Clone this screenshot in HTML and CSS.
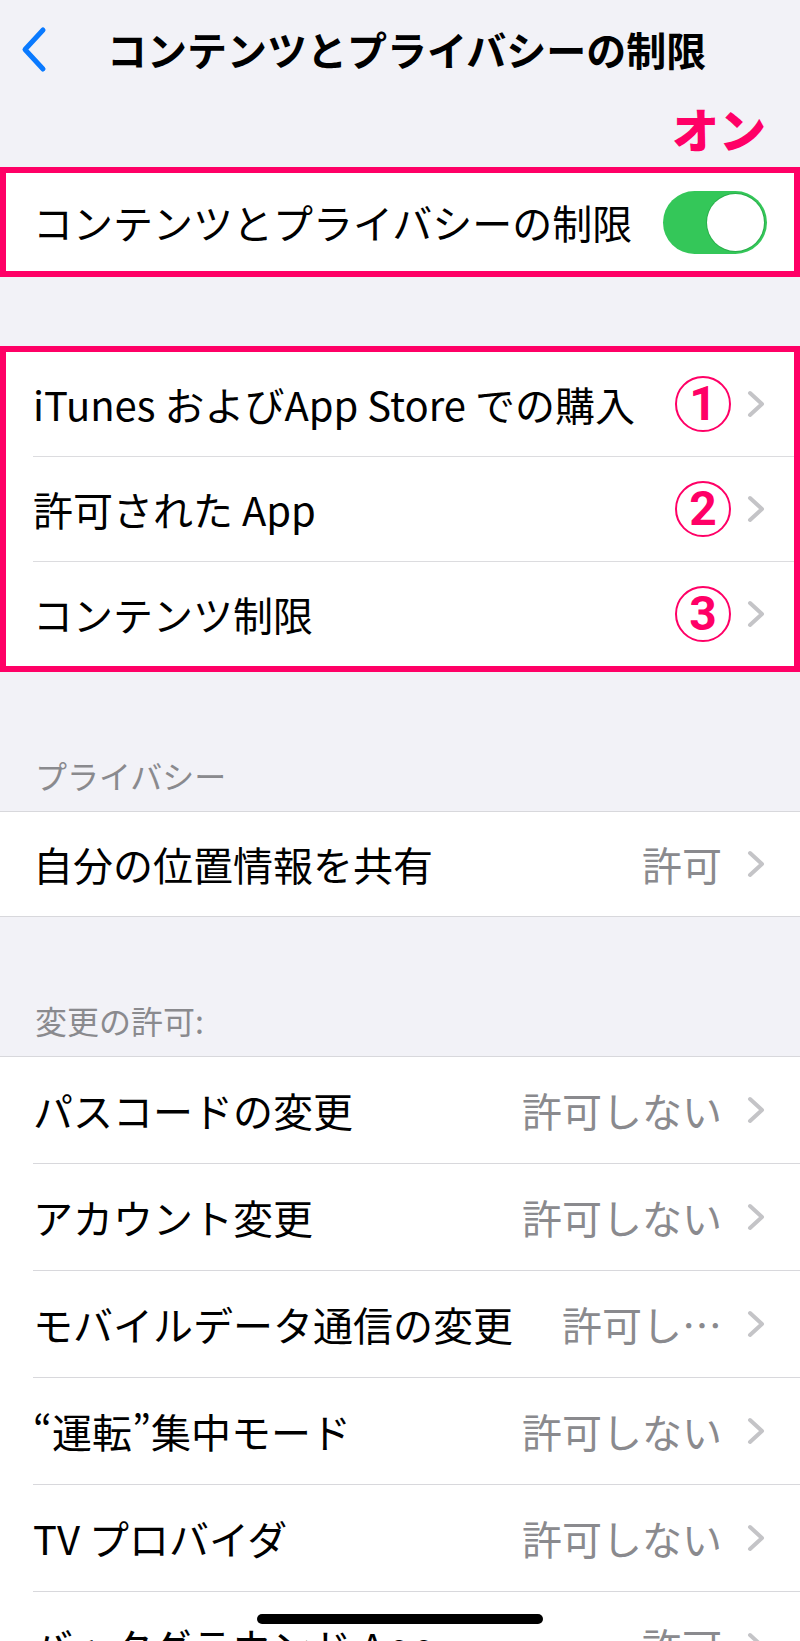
FILE: index.html
```html
<!DOCTYPE html>
<html lang="ja">
<head>
  <meta charset="UTF-8" />
  <meta name="viewport" content="width=device-width,initial-scale=1.0" />
  <title>コンテンツとプライバシーの制限</title>
  <link rel="stylesheet" href="styles.css">
</head>
<body>

<!-- NAV BAR -->
<header class="navbar">
  <svg class="back" width="27" height="47" viewBox="0 0 27 47">
    <path d="M23 4 L5 23.5 L23 43" fill="none" stroke="#0a7aff" stroke-width="5" stroke-linecap="round" stroke-linejoin="round"/>
  </svg>
  <h1>コンテンツとプライバシーの制限</h1>
</header>

<div class="note">オン</div>

<!-- MAIN SWITCH -->
<section class="mark">
  <div class="row">
    <div class="row-body">
      <span class="label">コンテンツとプライバシーの制限</span>
      <span class="toggle"><span class="knob"></span></span>
    </div>
  </div>
</section>

<!-- RESTRICTIONS -->
<section class="mark list">
  <div class="row">
    <div class="row-body">
      <span class="label">iTunes およびApp Store での購入</span>
      <span class="num">1</span>
      <svg class="chev" width="18" height="28" viewBox="0 0 18 28"><path d="M3 3 L15 14 L3 25" fill="none" stroke="#c4c4c7" stroke-width="4" stroke-linecap="round" stroke-linejoin="round"/></svg>
    </div>
  </div>
  <div class="row">
    <div class="row-body">
      <span class="label">許可された App</span>
      <span class="num">2</span>
      <svg class="chev" width="18" height="28" viewBox="0 0 18 28"><path d="M3 3 L15 14 L3 25" fill="none" stroke="#c4c4c7" stroke-width="4" stroke-linecap="round" stroke-linejoin="round"/></svg>
    </div>
  </div>
  <div class="row">
    <div class="row-body">
      <span class="label">コンテンツ制限</span>
      <span class="num">3</span>
      <svg class="chev" width="18" height="28" viewBox="0 0 18 28"><path d="M3 3 L15 14 L3 25" fill="none" stroke="#c4c4c7" stroke-width="4" stroke-linecap="round" stroke-linejoin="round"/></svg>
    </div>
  </div>
</section>

<!-- PRIVACY -->
<div class="section-title">プライバシー</div>
<section class="group">
  <div class="row">
    <div class="row-body">
      <span class="label">自分の位置情報を共有</span>
      <span class="value">許可</span>
      <svg class="chev" width="18" height="28" viewBox="0 0 18 28"><path d="M3 3 L15 14 L3 25" fill="none" stroke="#c4c4c7" stroke-width="4" stroke-linecap="round" stroke-linejoin="round"/></svg>
    </div>
  </div>
</section>

<!-- ALLOW CHANGES -->
<div class="section-title">変更の許可:</div>
<section class="group tall">
  <div class="row">
    <div class="row-body">
      <span class="label">パスコードの変更</span>
      <span class="value">許可しない</span>
      <svg class="chev" width="18" height="28" viewBox="0 0 18 28"><path d="M3 3 L15 14 L3 25" fill="none" stroke="#c4c4c7" stroke-width="4" stroke-linecap="round" stroke-linejoin="round"/></svg>
    </div>
  </div>
  <div class="row">
    <div class="row-body">
      <span class="label">アカウント変更</span>
      <span class="value">許可しない</span>
      <svg class="chev" width="18" height="28" viewBox="0 0 18 28"><path d="M3 3 L15 14 L3 25" fill="none" stroke="#c4c4c7" stroke-width="4" stroke-linecap="round" stroke-linejoin="round"/></svg>
    </div>
  </div>
  <div class="row">
    <div class="row-body">
      <span class="label">モバイルデータ通信の変更</span>
      <span class="value">許可し…</span>
      <svg class="chev" width="18" height="28" viewBox="0 0 18 28"><path d="M3 3 L15 14 L3 25" fill="none" stroke="#c4c4c7" stroke-width="4" stroke-linecap="round" stroke-linejoin="round"/></svg>
    </div>
  </div>
  <div class="row">
    <div class="row-body">
      <span class="label">“運転”集中モード</span>
      <span class="value">許可しない</span>
      <svg class="chev" width="18" height="28" viewBox="0 0 18 28"><path d="M3 3 L15 14 L3 25" fill="none" stroke="#c4c4c7" stroke-width="4" stroke-linecap="round" stroke-linejoin="round"/></svg>
    </div>
  </div>
  <div class="row">
    <div class="row-body">
      <span class="label">TV プロバイダ</span>
      <span class="value">許可しない</span>
      <svg class="chev" width="18" height="28" viewBox="0 0 18 28"><path d="M3 3 L15 14 L3 25" fill="none" stroke="#c4c4c7" stroke-width="4" stroke-linecap="round" stroke-linejoin="round"/></svg>
    </div>
  </div>
  <div class="row">
    <div class="row-body">
      <span class="label">バックグラウンド App</span>
      <span class="value">許可</span>
      <svg class="chev" width="18" height="28" viewBox="0 0 18 28"><path d="M3 3 L15 14 L3 25" fill="none" stroke="#c4c4c7" stroke-width="4" stroke-linecap="round" stroke-linejoin="round"/></svg>
    </div>
  </div>
</section>

<div class="home-bar"></div>

</body>
</html>
```

FILE: styles.css
```css
* {
  box-sizing: border-box;
  margin: 0;
  padding: 0;
}
body {
  font-family: "Noto Sans CJK JP", "Noto Sans", sans-serif;
  background-color: #f2f2f7;
  color: #000;
  height: 1641px;
  overflow: hidden;
}

/* NAV BAR */
.navbar {
  display: flex;
  align-items: center;
  height: 97px;
  padding-left: 20px;
}
.navbar .back {
  margin-top: 1px;
}
.navbar h1 {
  font-size: 40px;
  font-weight: 700;
  margin-left: 60px;
  line-height: 1;
}

/* PINK NOTE */
.note {
  height: 70px;
  line-height: 62px;
  text-align: right;
  padding-right: 34px;
  color: #ff0066;
  font-size: 47px;
  font-weight: 900;
}

/* HIGHLIGHT BOXES */
.mark {
  background-color: #fff;
  border: 6px solid #ff0066;
}
.mark .row {
  padding-left: 27px;
}
.mark .row-body {
  height: 98px;
  padding-right: 27px;
}
.list {
  margin-top: 69px;
}
.list .row-body {
  height: 105px;
  padding-right: 29px;
  border-bottom: 1px solid #dcdcdf;
}
.list .row:last-child .row-body {
  height: 104px;
  border-bottom: none;
}

/* ROWS */
.row-body {
  display: flex;
  align-items: center;
}
.label {
  flex: 1;
  font-size: 40px;
  line-height: 1;
  white-space: nowrap;
}
.value {
  font-size: 40px;
  line-height: 1;
  color: #8a8a8e;
  margin-right: 25px;
}
.chev {
  flex-shrink: 0;
}
.num {
  width: 56px;
  height: 56px;
  border: 2px solid #ff0066;
  border-radius: 50%;
  margin-right: 16px;
  display: flex;
  align-items: center;
  justify-content: center;
  color: #ff0066;
  font-family: "Roboto", sans-serif;
  font-weight: 700;
  font-size: 48px;
  line-height: 1;
}

/* TOGGLE */
.toggle {
  width: 104px;
  height: 63px;
  border-radius: 32px;
  background-color: #34c759;
  display: flex;
  align-items: center;
  justify-content: flex-end;
  padding-right: 3px;
}
.knob {
  width: 57px;
  height: 57px;
  border-radius: 50%;
  background-color: #fff;
  box-shadow: 0 0 0 1px rgba(30, 150, 60, 0.5);
}

/* GROUPED LISTS */
.section-title {
  height: 139px;
  display: flex;
  align-items: flex-end;
  padding: 0 0 16px 35px;
  font-size: 32px;
  line-height: 40px;
  color: #8a8a8e;
}
.group {
  background-color: #fff;
  border-top: 1px solid #d8d8dc;
  border-bottom: 1px solid #d8d8dc;
}
.group .row {
  padding-left: 33px;
}
.group .row-body {
  height: 104px;
  padding-right: 35px;
}
.tall .row-body {
  height: 107px;
  border-bottom: 1px solid #d8d8dc;
}
.tall .row:last-child .row-body {
  border-bottom: none;
}

/* HOME INDICATOR */
.home-bar {
  position: fixed;
  left: 257px;
  bottom: 17px;
  width: 286px;
  height: 10px;
  border-radius: 5px;
  background-color: #000;
}
```
